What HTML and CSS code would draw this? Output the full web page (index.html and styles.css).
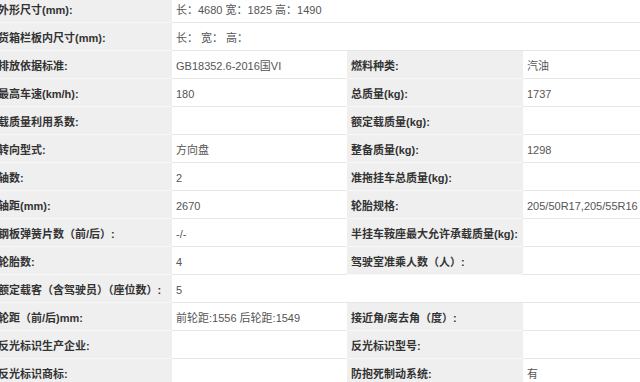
FILE: index.html
```html
<!DOCTYPE html>
<html lang="zh-CN">
<head>
<meta charset="utf-8">
<link rel="stylesheet" href="styles.css">
</head>
<body>
<table class="spec">
  <colgroup>
    <col class="c1"><col class="c2"><col class="c3"><col class="c4">
  </colgroup>
  <tr><td class="lb">外形尺寸(mm):</td><td class="vl" colspan="3">长：4680 宽：1825 高：1490</td></tr>
  <tr><td class="lb">货箱栏板内尺寸(mm):</td><td class="vl" colspan="3">长：&nbsp;宽：&nbsp;高：</td></tr>
  <tr><td class="lb">排放依据标准:</td><td class="vl">GB18352.6-2016国VI</td><td class="lb">燃料种类:</td><td class="vl">汽油</td></tr>
  <tr><td class="lb">最高车速(km/h):</td><td class="vl">180</td><td class="lb">总质量(kg):</td><td class="vl">1737</td></tr>
  <tr><td class="lb">载质量利用系数:</td><td class="vl"></td><td class="lb">额定载质量(kg):</td><td class="vl"></td></tr>
  <tr><td class="lb">转向型式:</td><td class="vl">方向盘</td><td class="lb">整备质量(kg):</td><td class="vl">1298</td></tr>
  <tr><td class="lb">轴数:</td><td class="vl">2</td><td class="lb">准拖挂车总质量(kg):</td><td class="vl"></td></tr>
  <tr><td class="lb">轴距(mm):</td><td class="vl">2670</td><td class="lb">轮胎规格:</td><td class="vl">205/50R17,205/55R16</td></tr>
  <tr><td class="lb">钢板弹簧片数（前/后）:</td><td class="vl">-/-</td><td class="lb">半挂车鞍座最大允许承载质量(kg):</td><td class="vl"></td></tr>
  <tr><td class="lb">轮胎数:</td><td class="vl">4</td><td class="lb">驾驶室准乘人数（人）:</td><td class="vl"></td></tr>
  <tr><td class="lb">额定载客（含驾驶员）（座位数）:</td><td class="vl" colspan="3">5</td></tr>
  <tr><td class="lb">轮距（前/后)mm:</td><td class="vl">前轮距:1556 后轮距:1549</td><td class="lb">接近角/离去角（度）:</td><td class="vl"></td></tr>
  <tr><td class="lb">反光标识生产企业:</td><td class="vl"></td><td class="lb">反光标识型号:</td><td class="vl"></td></tr>
  <tr><td class="lb">反光标识商标:</td><td class="vl"></td><td class="lb">防抱死制动系统:</td><td class="vl">有</td></tr>
</table>
</body>
</html>
```
FILE: styles.css
```css
html, body {
  margin: 0;
  padding: 0;
  background: #ffffff;
  overflow: hidden;
}
body {
  width: 640px;
  height: 382px;
  font-family: "Liberation Sans", "Noto Sans CJK SC", sans-serif;
  font-size: 11px;
}
.spec {
  border-collapse: separate;
  border-spacing: 0;
  table-layout: fixed;
  width: 680px;
  margin-top: -5px;
  margin-left: -6px;
}
.c1 { width: 178px; }
.c2 { width: 175px; }
.c3 { width: 176px; }
.c4 { width: 151px; }
.spec td {
  box-sizing: border-box;
  height: 28px;
  padding: 3px 0 0 4px;
  white-space: nowrap;
  overflow: hidden;
  vertical-align: middle;
  line-height: 16px;
}
.lb {
  background: #efefef;
  color: #333333;
  font-weight: 700;
  border-bottom: 1px solid #f8f8f8;
}
.vl {
  background: #ffffff;
  color: #555555;
  border-bottom: 1px solid #e6e6e6;
}
```
